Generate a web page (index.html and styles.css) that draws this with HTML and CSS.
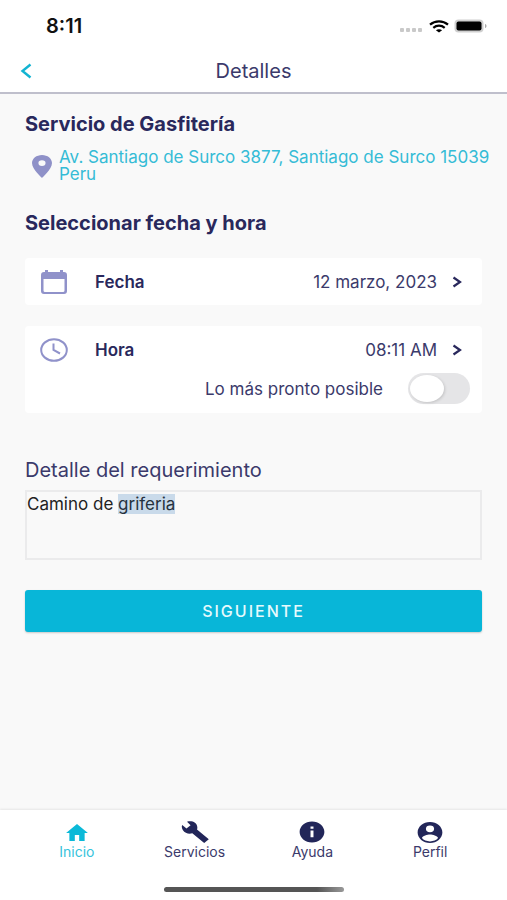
FILE: index.html
```html
<!DOCTYPE html>
<html lang="es">
<head>
    <meta charset="UTF-8">
    <meta name="viewport" content="width=device-width, initial-scale=1">
    <title>Detalles</title>
    <link rel="stylesheet" href="styles.css">
</head>
<body>
    <div class="status-bar">
        <span class="time">8:11</span>
        <div class="status-icons">
            <svg width="24" height="13" viewBox="0 0 24 13" fill="#c9c9c9">
                <rect x="0" y="8" width="4" height="4" rx="1"/>
                <rect x="6" y="8" width="4" height="4" rx="1"/>
                <rect x="12" y="8" width="4" height="4" rx="1"/>
                <rect x="18" y="8" width="4" height="4" rx="1"/>
            </svg>
            <svg width="20" height="13" viewBox="0 0 20 13" fill="none" stroke="#000" stroke-width="2.2">
                <path d="M1 4.6C6 0.2 14 0.2 19 4.6"/>
                <path d="M4.3 7.8C7.6 5 12.4 5 15.7 7.8"/>
                <path d="M10 12.6L6.9 10.2C8.6 8.8 11.4 8.8 13.1 10.2Z" fill="#000" stroke="none"/>
            </svg>
            <svg width="33" height="14" viewBox="0 0 33 14">
                <rect x="0.5" y="0.5" width="29" height="13" rx="4" fill="#cfcfcf"/>
                <rect x="2.5" y="2.5" width="25" height="9" rx="2" fill="#000"/>
                <path d="M31 5C33 5.600 33 8.400 31 9Z" fill="#aaa"/>
            </svg>
        </div>
    </div>

    <header class="header">
        <button class="back-btn" type="button" aria-label="Volver">
            <svg width="12" height="16" viewBox="0 0 12 16" fill="none" stroke="#12b4d2" stroke-width="2.4">
                <path d="M10.500 1.500L2.500 8L10.500 14.500"/>
            </svg>
        </button>
        <h1>Detalles</h1>
    </header>

    <main class="content">
        <h2>Servicio de Gasfitería</h2>
        <div class="address">
            <svg width="20" height="23" viewBox="5 2 14 20" preserveAspectRatio="none" fill="#8f91c8">
                <path d="M12 2C8.130 2 5 5.130 5 9c0 5.250 7 13 7 13s7-7.750 7-13c0-3.870-3.130-7-7-7zm0 9.500a2.500 2.500 0 1 1 0-5 2.500 2.500 0 0 1 0 5z"/>
            </svg>
            <a href="#">Av. Santiago de Surco 3877, Santiago de Surco 15039 Peru</a>
        </div>

        <h2>Seleccionar fecha y hora</h2>
        <div class="card">
            <button class="row" type="button">
                <svg width="28" height="26" viewBox="0 0 28 26" fill="#9092ca">
                    <path fill-rule="evenodd" d="M5 1H8V3H20V1H23V3H24Q27 3 27 6V22Q27 25 24 25H4Q1 25 1 22V6Q1 3 4 3H5ZM3.500 10V21.500Q3.500 23 5 23H23Q24.500 23 24.500 21.500V10Z"/>
                </svg>
                <span class="row-name">Fecha</span>
                <span class="row-value">12 marzo, 2023</span>
                <svg class="chevron" width="10" height="12" viewBox="0 0 10 12"><path d="M1.500 1.500L8 6L1.500 10.500"/></svg>
            </button>
        </div>
        <div class="card">
            <button class="row" type="button">
                <svg width="28" height="26" viewBox="0 0 28 26" fill="none" stroke="#9092ca" stroke-width="2">
                    <ellipse cx="14" cy="13" rx="12.800" ry="10.800"/>
                    <path d="M13.500 6.500V13L20 16.500"/>
                </svg>
                <span class="row-name">Hora</span>
                <span class="row-value">08:11 AM</span>
                <svg class="chevron" width="10" height="12" viewBox="0 0 10 12"><path d="M1.500 1.500L8 6L1.500 10.500"/></svg>
            </button>
            <div class="switch-row">
                <label for="asap">Lo más pronto posible</label>
                <input class="switch" type="checkbox" id="asap">
            </div>
        </div>

        <label class="detail-label" for="detail">Detalle del requerimiento</label>
        <textarea id="detail" spellcheck="false">Camino de griferia</textarea>

        <button class="btn" type="button">SIGUIENTE</button>
    </main>

    <nav class="tabs">
        <a class="tab active" href="#">
            <svg width="24" height="22" viewBox="1 0 22 22" preserveAspectRatio="none"><path d="M10 20v-6h4v6h5v-8h3L12 3 2 12h3v8z"/></svg>
            <span>Inicio</span>
        </a>
        <a class="tab" href="#">
            <svg width="28" height="22" viewBox="0 0 28 22" preserveAspectRatio="none"><path d="M6 0.800C10.500-0.700 16 1.300 16.300 6C16.400 7 16.300 7.800 16 8.500L27.800 18.200L23.200 22L11.300 12.300C8 13.200 4 12.500 1.800 9C0.700 7.200 0.500 5.500 1.200 4L5.500 7.600L9.600 4.200Z"/></svg>
            <span>Servicios</span>
        </a>
        <a class="tab" href="#">
            <svg width="26" height="22" viewBox="1.500 1.500 21 21" preserveAspectRatio="none"><path d="M12 2C6.480 2 2 6.480 2 12s4.480 10 10 10 10-4.480 10-10S17.520 2 12 2zm1.200 15h-2.400v-6.500h2.400zm0-8h-2.400V6.700h2.400z"/></svg>
            <span>Ayuda</span>
        </a>
        <a class="tab" href="#">
            <svg width="26" height="22" viewBox="1.500 1 21 21" preserveAspectRatio="none"><path d="M12 2C6.480 2 2 6.480 2 12s4.480 10 10 10 10-4.480 10-10S17.520 2 12 2zm0 3.200a3.300 3.300 0 1 1 0 6.600 3.300 3.300 0 0 1 0-6.600zm0 15.300c-2.800 0-5.200-1.200-6.500-3.200.4-2.100 4.300-3.300 6.500-3.300s6.100 1.200 6.500 3.300c-1.300 2-3.700 3.200-6.500 3.200z"/></svg>
            <span>Perfil</span>
        </a>
    </nav>
    <div class="home-bar"><div class="home-indicator"></div></div>

    <script src="script.js"></script>
</body>
</html>
```

FILE: styles.css
```css
:root {
    --primary-color: #29285c;
    --text-color: #3b3a6b;
    --accent-color: #08b6d8;
    --bg-color: #f9f9f9;
}

* {
    margin: 0;
    padding: 0;
    box-sizing: border-box;
}

body {
    display: flex;
    flex-direction: column;
    min-height: 100vh;
    font-family: Inter, sans-serif;
    font-optical-sizing: none;
    font-size: 17px;
    background-color: var(--bg-color);
    color: var(--text-color);
}

button {
    font: inherit;
    font-optical-sizing: inherit;
    color: inherit;
    background: none;
    border: none;
    cursor: pointer;
}

a {
    text-decoration: none;
}

svg {
    flex-shrink: 0;
}

.status-bar {
    display: flex;
    justify-content: space-between;
    align-items: center;
    height: 50px;
    padding: 2px 20px 0 46px;
    background: white;
}

.time {
    font-size: 20px;
    font-weight: 600;
    color: #111;
}

.status-icons {
    display: flex;
    align-items: center;
    gap: 5px;
}

.header {
    display: grid;
    grid-template-columns: 40px 1fr 40px;
    align-items: center;
    height: 44px;
    padding: 0 16px;
    background: white;
    border-bottom: 2px solid #bfbfcc;
}

.back-btn {
    display: flex;
    padding: 4px;
}

.header h1 {
    font-size: 20px;
    line-height: 24px;
    font-weight: 400;
    text-align: center;
}

.content {
    flex: 1;
    display: flex;
    flex-direction: column;
    padding: 18px 25px;
}

h2 {
    font-size: 20px;
    line-height: 24px;
    font-weight: 700;
    color: var(--primary-color);
}

.address {
    display: flex;
    align-items: center;
    gap: 7px;
    margin: 13px -8px 28px 0;
    padding-left: 7px;
}

.address a {
    line-height: 17px;
    color: #35bcd6;
}

.card {
    margin-top: 21px;
    padding: 0 20px 0 15px;
    background: white;
    border-radius: 4px;
}

h2 + .card {
    margin-top: 23px;
}

.row {
    display: flex;
    align-items: center;
    width: 100%;
    height: 47px;
}

.row-name {
    margin-left: 27px;
    font-weight: 600;
    color: var(--primary-color);
}

.row-value {
    margin-left: auto;
}

.chevron {
    margin-left: 15px;
    fill: none;
    stroke: var(--primary-color);
    stroke-width: 2.2;
}

.switch-row {
    display: flex;
    justify-content: flex-end;
    align-items: center;
    gap: 25px;
    margin-right: -8px;
    padding-bottom: 9px;
}

.switch {
    appearance: none;
    width: 62px;
    height: 31px;
    padding: 2px;
    border-radius: 16px;
    background: #e5e5e7;
    cursor: pointer;
}

.switch::before {
    content: "";
    display: block;
    width: 34px;
    height: 27px;
    border-radius: 50%;
    background: white;
    box-shadow: 1px 1px 3px rgba(0,0,0,0.15);
}

.switch:checked {
    background: var(--accent-color);
}

.switch:checked::before {
    margin-left: auto;
}

.detail-label {
    margin: 45px 0 8px;
    font-size: 20px;
    line-height: 24px;
}

textarea {
    width: 100%;
    height: 70px;
    padding: 2px 0;
    border: 2px solid #ebebec;
    outline: none;
    resize: none;
    background: transparent;
    font-family: inherit;
    font-optical-sizing: inherit;
    font-size: 17px;
    line-height: 20px;
    color: #222;
}

textarea::selection {
    background: #c9daea;
    color: #26323f;
}

.btn {
    height: 42px;
    margin-top: 30px;
    border-radius: 3px;
    background-color: var(--accent-color);
    box-shadow: 0 1px 2px rgba(0,0,0,0.2);
    color: #e6fafd;
    font-size: 16px;
    font-weight: 500;
    letter-spacing: 2px;
}

.tabs {
    display: flex;
    height: 60px;
    padding: 11px 18px 0;
    background: white;
    box-shadow: 0 -1px 2px rgba(0,0,0,0.08);
}

.tab {
    flex: 1;
    display: flex;
    flex-direction: column;
    align-items: center;
    font-size: 14px;
    line-height: 18px;
    color: var(--text-color);
    fill: #222659;
}

.tab.active {
    color: #35c3dc;
    fill: #0bb9d8;
}

.home-bar {
    display: flex;
    justify-content: center;
    height: 30px;
    padding-top: 17px;
    background: white;
}

.home-indicator {
    width: 180px;
    height: 5px;
    border-radius: 3px;
    background: linear-gradient(to right, #555 85%, #999);
}
```

FILE: script.js
```js
// select the last word of the request
const detail = document.getElementById('detail');
detail.focus({ preventScroll: true });
detail.setSelectionRange(detail.value.lastIndexOf(' ') + 1, detail.value.length);
```
